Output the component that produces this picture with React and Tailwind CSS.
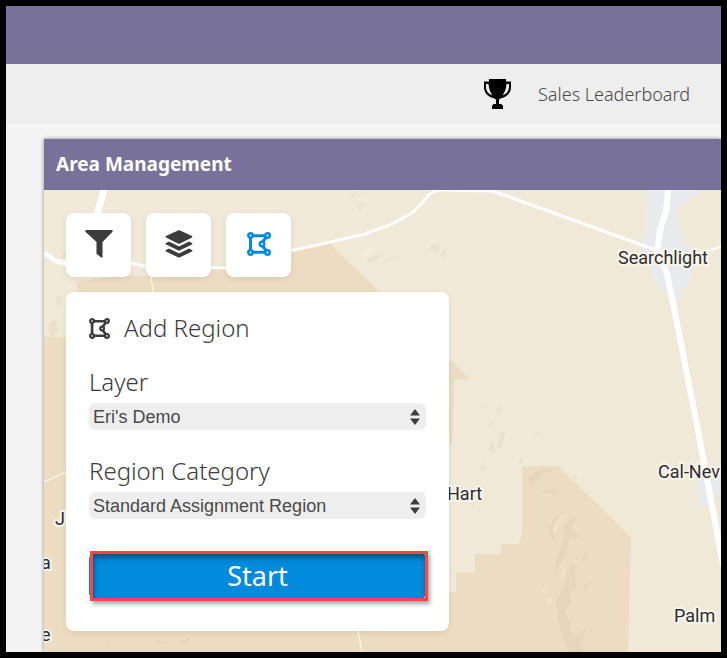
import React, { useState } from 'react';

const filterOptions = {
  layers: ["Eri's Demo"],
  categories: ['Standard Assignment Region'],
};

const TrophyIcon = ({ className }) => (
  <svg viewBox="0 0 27 30" className={className} aria-hidden="true">
    <path
      d="M5 0h17v2.500h5V8c0 6-4 10-10.500 11.500l-1.500 1V25h2.500l1.500 2v3H8v-3l1.500-2H12v-4.500l-1.500-1C4 18 0 14 0 8V2.500h5z"
      fill="currentColor"
    />
    <path d="M2 5h2.500c.3 4 1.500 8 4 11.500C4.500 15 2 12 2 8zM25 5h-2.500c-.3 4-1.500 8-4 11.500C22.500 15 25 12 25 8z" fill="#eee" />
    <path d="M5 5h2l.5 5 1.500 4.500Q5.500 10 5 5zM22 5h-2l-.5 5-1.500 4.500Q21.500 10 22 5z" fill="currentColor" />
  </svg>
);

const FilterIcon = ({ className }) => (
  <svg viewBox="0 0 28 28" className={className} aria-hidden="true">
    <path d="M1 0h26q1.200.7.3 2L17.500 12v15.300q-.8.5-1.500 0l-4.500-3.500V12L.7 2Q-.2.700 1 0z" fill="currentColor" />
  </svg>
);

const LayersIcon = ({ className }) => (
  <svg viewBox="0 0 28 28" className={className} aria-hidden="true" fill="currentColor">
    <path d="M13 .5q1-.5 2 0l12 5.500q1 .8 0 1.600L15 13.500q-1 .5-2 0L1 7.600q-1-.8 0-1.600z" />
    <path d="M1 13l3-1.400 9 4.300q1 .5 2 0l9-4.300 3 1.400q1 .8 0 1.600L15 20.300q-1 .5-2 0L1 14.600q-1-.8 0-1.600z" />
    <path d="M1 20l3-1.400 9 4.300q1 .5 2 0l9-4.300 3 1.400q1 .8 0 1.600L15 27.300q-1 .5-2 0L1 21.600q-1-.8 0-1.600z" />
  </svg>
);

const RegionIcon = ({ className }) => (
  <svg viewBox="0 0 24 24" className={className} aria-hidden="true" fill="none" stroke="currentColor">
    <path d="M3.500 5.500v13M5.500 3.700h13M5.500 20.300h13M19.500 5l-4 5M19.500 19l-4-5" strokeWidth="3" />
    <g strokeWidth="2.500">
      <circle cx="3.500" cy="3.500" r="2.200" />
      <circle cx="20.500" cy="3.500" r="2.200" />
      <circle cx="3.500" cy="20.500" r="2.200" />
      <circle cx="20.500" cy="20.500" r="2.200" />
      <circle cx="15" cy="12" r="2.200" />
    </g>
  </svg>
);

const SortArrows = () => (
  <svg
    viewBox="0 0 10 16"
    className="pointer-events-none absolute top-1.5 right-1.5 h-4 w-2.5 text-[#3c3c3c]"
    aria-hidden="true"
  >
    <path d="M5 0l5 6.500H0zM5 16l5-6.500H0z" fill="currentColor" />
  </svg>
);

const MapTerrain = () => (
  <svg
    viewBox="44 190 677 462"
    preserveAspectRatio="xMinYMin slice"
    className="absolute inset-0 h-full w-full"
    aria-hidden="true"
  >
    <rect x="44" y="190" width="677" height="462" fill="#f0e9d7" />

    {/* protected land */}
    <g fill="#ecdcc2">
      <path d="M58 262h77v14h-20l-38 6v10h40v45H44v315h584l3-115-73-71h-36v68l-3 10h-18v10h-26v19h-19v19h-7V445h3l2-66h16L330 244l-40 7-80 17-20 8h-55v-14H58z" />
    </g>
    <path d="M44 276h33v61H44z" fill="#f0e9d7" />
    <path d="M135 255l55 12v9h-55z" fill="#f0e9d7" />

    {/* hills */}
    <g fill="#e6d6bd">
      <path d="M528 477l15-9 12 2-14 5-10 12zM540 491l14-2 7 6-20-3zM564 525l13-9-6 12 8 9-10 2-4 18-8 11-4 9 4-21 7-16zM566 571l9-7v17l2 6-7 7 1 11-7 6 7 13-1 8-8 4-4-17-2-18 7-11zM549 533l3-12 10-9-9 16 1 15zM582 559l5-10v8l-4 6zM584 586l10-6-6 6-2 8zM562 638l7-10 6 8 12-8-7 16 4 8h-14z" />
      <path d="M153 643l5-3 13 2-10 3zM178 643l14-7-6 8zM104 644l6-4-3 8z" />
    </g>
    <g fill="#eae0cc">
      <path d="M349 198l10-7-6 6zM357 204l6-2-3 10zM364 263l10-7 7-2-6 7zM386 263l4-5 7-2zM428 249l6-5 5 4-4 3zM440 254l5-5 1 9z" />
      <path d="M488 451l5-11 2 13zM497 445l5-14 3 1-4 18zM486 426l7-5-2 5zM533 435l7-5-2 4zM519 464l1-6 4 3zM480 471l4-10v8zM472 507l2-8 1 6zM574 476l5 2-5 2zM496 411l6-6-4 9zM481 404l3 4-2 1z" />
    </g>
    <path d="M55 301l7-8-2 14zM48 325l7-6 3 13-7 5zM60 257l7-6-3 7z" fill="#eee0c8" />
    <path d="M361 256l6-7 9 1-10 7zM358 200l9-2-7 4zM426 245l6-6 5 1-7 6z" fill="#f5edda" />
    <path
      d="M553 531q2-14 14-17-8 6-12 19zM560 576l7-11-2 14zM541 592l7-10 1 3-5 8zM546 600l5-4 2 6-5 3z"
      fill="#f1e2ca"
    />

    {/* towns */}
    <g fill="#e8eaee">
      <path d="M647 190h55l-25 19 6 33 9 6v25l-5 15h-8l3 12h-11l-17-20-12-29 3-25z" />
      <path d="M696 478l2 14 2 16 10-4 11-15v-28z" />
    </g>

    {/* minor roads */}
    <g fill="none" stroke="#fff" strokeLinejoin="round">
      <path d="M104 190l-8 28" strokeWidth="7" />
      <path d="M44 253l12 8 22 5 14-2" strokeWidth="5" />
      <path d="M120 261l24 5 36 1 53 1 57-17 40-9 35-8 27-10 20-11 12-12 5-6q7-6 17-5l47 1 50 18 96 35 30 11" strokeWidth="3" />
      <path d="M699 253l22-6" strokeWidth="2" />
      <path d="M151 276l2 16M44 482l22-10M358 631l4 21" strokeWidth="1" />
    </g>

    {/* highway */}
    <path d="M668 190l-2 22q-8 18-8 39l9 23 7 34 23 117 26 140" fill="none" stroke="#fff" strokeWidth="6" />
  </svg>
);

const mapLabels = [
  { name: 'Searchlight', place: 'left-[574px] top-[56px]' },
  { name: 'Cal-Nev', place: 'left-[614px] top-[270px]' },
  { name: 'Palm', place: 'left-[630px] top-[414px]' },
  { name: 'Hart', place: 'left-[403px] top-[292px]' },
  { name: 'J', place: 'left-[11px] top-[317px]' },
  { name: 'a', place: 'left-[-3px] top-[361px]' },
  { name: 'e', place: 'left-[-3px] top-[433px]' },
];

const tools = [
  { name: 'Filter', icon: FilterIcon, size: 'h-7 w-7' },
  { name: 'Layers', icon: LayersIcon, size: 'h-7 w-7' },
  { name: 'Add Region', icon: RegionIcon, size: 'h-6 w-6' },
];

const SelectField = ({ id, label, options }) => (
  <div>
    <label htmlFor={id} className="block text-[24px] leading-8">
      {label}
    </label>
    <div className="relative mt-[5px]">
      <select
        id={id}
        className="block h-[27px] w-full appearance-none rounded-md bg-[#eee] pl-1 font-['Liberation_Sans',Arial,sans-serif] text-[18px] leading-6 font-normal text-[#4a4a4a]"
      >
        {options.map((option) => (
          <option key={option}>{option}</option>
        ))}
      </select>
      <SortArrows />
    </div>
  </div>
);

const App = () => {
  const [activeTool, setActiveTool] = useState('Add Region');

  return (
    <div className="flex min-h-screen flex-col overflow-hidden border-6 border-black bg-[#f4f4f4] font-['Noto_Sans',sans-serif] text-[#3c3c3c]">
      <header className="h-[58px] bg-[#787199]" />

      <nav className="flex h-[60px] items-center justify-end gap-[27px] bg-[#eee] pr-[31px]">
        <TrophyIcon className="h-[30px] w-[27px] text-black" />
        <a href="#leaderboard" className="text-[18px] font-light text-[#4a4a4a]">
          Sales Leaderboard
        </a>
      </nav>

      <main className="flex flex-1 flex-col pt-[15px] pl-[38px]">
        <section className="flex flex-1 flex-col shadow-[0_0_4px_rgba(0,0,0,0.45)]">
          <h1 className="flex h-[51px] items-center bg-[#787199] px-3 text-[19px] font-bold text-white">
            Area Management
          </h1>

          <div className="relative flex-1 overflow-hidden px-[22px] pt-[23px] pb-[21px]">
            <MapTerrain />
            {mapLabels.map((label) => (
              <span
                key={label.name}
                className={`absolute whitespace-nowrap font-[Roboto,sans-serif] text-[18px] leading-6 text-[#2b2d31] [paint-order:stroke_fill] [-webkit-text-stroke:4px_#f8f4ea] ${label.place}`}
              >
                {label.name}
              </span>
            ))}

            <div className="relative flex gap-[15px]">
              {tools.map((tool) => (
                <button
                  key={tool.name}
                  aria-label={tool.name}
                  onClick={() => setActiveTool(tool.name)}
                  className={`flex h-16 w-[65px] items-center justify-center rounded-lg bg-white pb-0.5 shadow-[0_2px_6px_rgba(0,0,0,0.08)] ${
                    activeTool === tool.name ? 'text-[#028adc]' : 'text-[#3c3c3c]'
                  }`}
                >
                  <tool.icon className={tool.size} />
                </button>
              ))}
            </div>

            <form
              onSubmit={(e) => e.preventDefault()}
              className="relative mt-[15px] w-[383px] max-w-full rounded-lg bg-white px-[23px] pt-5 pb-[30px] font-light shadow-[0_2px_6px_rgba(0,0,0,0.08)]"
            >
              <h2 className="flex items-center gap-[14px] text-[24px] leading-8">
                <RegionIcon className="h-[21px] w-[21px]" />
                Add Region
              </h2>
              <div className="mt-[22px] flex flex-col gap-[25px]">
                <SelectField id="layer" label="Layer" options={filterOptions.layers} />
                <SelectField id="category" label="Region Category" options={filterOptions.categories} />
              </div>
              <div className="relative mt-8 py-0.5">
                <button
                  type="submit"
                  className="block h-[46px] w-full rounded-md bg-[#028adc] text-[27px] leading-8 font-normal text-white"
                >
                  Start
                </button>
                {/* highlight frame */}
                <span className="pointer-events-none absolute inset-y-0 -right-0.5 left-px border-3 border-[#ff4444] shadow-[2px_3px_4px_rgba(0,0,0,0.35),inset_1px_4px_5px_rgba(0,0,0,0.4)]" />
              </div>
            </form>
          </div>
        </section>
      </main>
    </div>
  );
};

export default App;
